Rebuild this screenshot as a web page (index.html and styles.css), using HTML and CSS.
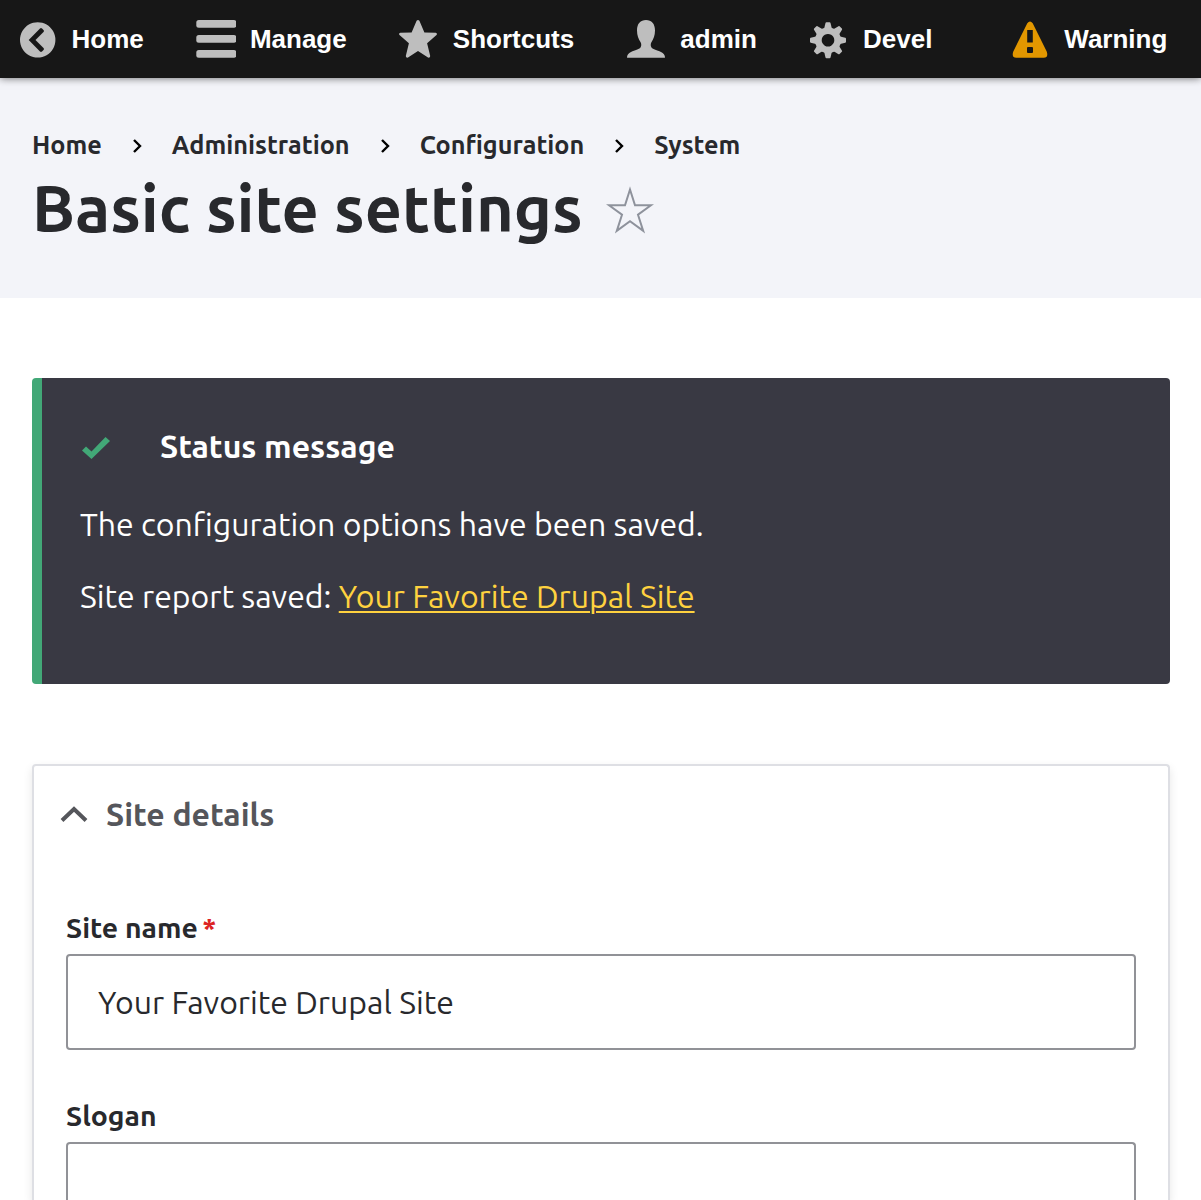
FILE: index.html
```html
<!DOCTYPE html>
<html lang="en">
<head>
<meta charset="utf-8">
<title>Basic site settings</title>
<link rel="stylesheet" href="styles.css">
</head>
<body>
<nav class="toolbar">
  <a class="tab"><svg class="icon" viewBox="0 0 40 40"><path fill-rule="evenodd" d="M20.700 2.200a17.700 17.700 0 1 0 .01 0zM23 8.500q1-.8 2 0l1.500 1.500q.9 1 0 2L18.500 20l8 8q.9 1 0 2L25 31.500q-1 .8-2 0L11.700 20z"/></svg><span>Home</span></a>
  <a class="tab"><svg class="icon" viewBox="0 0 40 40"><rect y="0" x=".3" width="40" height="7.700" rx="2.500"/><rect y="15" x=".3" width="40" height="7.700" rx="2.500"/><rect y="30" x=".3" width="40" height="7.700" rx="2.500"/></svg><span>Manage</span></a>
  <a class="tab"><svg class="icon" viewBox="0 0 40 40"><path transform="translate(-1 0)" d="M18.600.8q1.400-1.600 2.800 0l5 11.800 11.300.2q2 .6.800 2.200l-9.400 8.200 3.100 12.900q-.2 2-2.200 1.400L20 31l-10 6.500q-2 .6-2.200-1.400l3.100-12.900L1.500 15q-1.200-1.600.8-2.200l11.300-.2z"/></svg><span>Shortcuts</span></a>
  <a class="tab"><svg class="icon" viewBox="0 0 40 40"><path d="M20 0c5.500 0 9 3.500 9 10.500 0 5-1.500 8.500-3.600 11.700-.9 1.500-.9 3.800.1 5.300 1.500 2.300 5.500 2.200 9.500 4.500 2.500 1.400 4 3 4 5.200q0 .6-.7.6H1.700q-.7 0-.7-.6c0-2.200 1.500-3.800 4-5.200 4-2.300 8-2.200 9.500-4.500 1-1.500 1-3.800.1-5.300C12.500 19 11 15.500 11 10.500 11 3.500 14.500 0 20 0z"/></svg><span>admin</span></a>
  <a class="tab"><svg class="icon" viewBox="0 0 40 40"><g transform="translate(19 20.200)"><path fill-rule="evenodd" d="M0-13a13 13 0 1 0 .01 0zM0-6.300a6.300 6.300 0 1 1-.01 0z"/><g id="teeth"><path id="tooth" d="M-4-11l1.500-6.300q.2-.7.900-.7h3.200q.7 0 .9.700L4-11z"/><use href="#tooth" transform="rotate(45)"/><use href="#tooth" transform="rotate(90)"/><use href="#tooth" transform="rotate(135)"/></g><use href="#teeth" transform="rotate(180)"/></g></svg><span>Devel</span></a>
  <a class="tab tab-warning"><svg class="icon" viewBox="0 0 40 40"><path fill-rule="evenodd" d="M17.300 3.300q2.700-3.600 5.400 0L36.700 31.500q2 6-3 6.300H6.300q-5-.3-3-6.300zM17.200 10v12.500h5.600V10zM18 27q-1 0-1 1v4q0 1 1 1h4q1 0 1-1v-4q0-1-1-1z"/></svg><span>Warning</span></a>
</nav>
<header class="page-header">
  <nav class="breadcrumb">
    <a class="crumb-home">Home</a>
    <svg class="chevron" viewBox="0 0 10 16"><path d="M2 2l6 6-6 6"/></svg>
    <a class="crumb-admin">Administration</a>
    <svg class="chevron" viewBox="0 0 10 16"><path d="M2 2l6 6-6 6"/></svg>
    <a class="crumb-config">Configuration</a>
    <svg class="chevron" viewBox="0 0 10 16"><path d="M2 2l6 6-6 6"/></svg>
    <a class="crumb-system">System</a>
  </nav>
  <div class="title-row">
    <h1>Basic site settings</h1>
    <svg class="favorite" viewBox="0 0 48 48"><path d="M24 3.500l5 15.700H45L32 28.700l5.200 16.200L24 35.200 10.800 44.900 16 28.700 3 19.200h16z"/></svg>
  </div>
</header>
<main>
  <section class="message">
    <div class="message-head">
      <svg class="check" viewBox="0 0 28 24"><path d="M0 14.500L4 10.500l5.500 5L23.500 1l4.500 4L9.500 23z"/></svg>
      <h2>Status message</h2>
    </div>
    <p class="saved">The configuration options have been saved.</p>
    <p class="report">Site report saved: <a class="report-link">Your Favorite Drupal Site</a></p>
  </section>
  <section class="details">
    <div class="summary">
      <svg class="caret" viewBox="0 0 28 18"><path d="M2 15.500L14 4l12 11.500"/></svg>
      <span class="summary-text">Site details</span>
    </div>
    <label class="label-name" for="name"><span>Site name</span><span class="required">*</span></label>
    <input id="name" type="text" value="Your Favorite Drupal Site">
    <label class="label-slogan" for="slogan">Slogan</label>
    <input id="slogan" type="text">
  </section>
</main>
</body>
</html>
```
FILE: styles.css
```css
* { box-sizing: border-box; }
body {
  display: flex;
  flex-direction: column;
  margin: 0;
  height: 1200px;
  overflow: hidden;
  background: #fff;
  color: #28292d;
  font-family: Ubuntu, "Noto Sans", sans-serif;
}
h1, h2, p { margin: 0; }
.toolbar {
  position: relative;
  display: flex;
  flex: none;
  height: 78px;
  background: #171717;
  box-shadow: 0 0 8px rgba(0, 0, 0, .6);
  color: #fff;
  font: bold 26px/78px "Liberation Sans", Arial, sans-serif;
}
.tab { display: flex; gap: 14.17px; padding: 0 34.67px 0 17.33px; }
.tab-warning { margin-left: auto; padding-right: 33.67px; }
.icon { width: 40px; height: 40px; margin-top: 20px; fill: #bebebe; }
.tab-warning .icon { fill: #e29700; }
.page-header { flex: none; height: 220px; padding: 47px 32px 0; background: #f3f4f9; }
.breadcrumb {
  display: flex;
  align-items: center;
  height: 40px;
  font-size: 25.25px;
  font-weight: 600;
  line-height: 40px;
}
.chevron { width: 10px; height: 16px; margin: 2px 30px 0; fill: none; stroke: #000; stroke-width: 2.4; }
.title-row { display: flex; gap: 23.5px; height: 90px; }
h1 { margin-top: -2px; font-size: 64.8px; font-weight: 600; line-height: 90px; white-space: nowrap; }
.favorite { width: 48px; height: 48px; margin-top: 21px; fill: none; stroke: #8e929c; stroke-width: 2; }
main { display: flex; flex: 1; flex-direction: column; min-height: 0; padding: 80px 31px 0 32px; }
.message {
  flex: none;
  height: 306px;
  padding: 45px 38px;
  border-left: 10px solid #42a877;
  border-radius: 4px;
  background: #393943;
  color: #fff;
  font-size: 32px;
  font-weight: 400;
}
.message-head { display: flex; align-items: center; gap: 50px; height: 46px; }
.check { width: 28px; height: 24px; margin: 4px 0 0 2px; fill: #42a877; }
h2 { font-size: 32px; font-weight: 600; line-height: 46px; }
.saved { margin-top: 31px; line-height: 48px; }
.report { margin-top: 24px; line-height: 48px; }
.report-link { color: #ffd23f; text-decoration: underline; text-decoration-thickness: 2px; text-underline-offset: 3px; }
.details {
  flex: 1;
  min-height: 0;
  overflow: hidden;
  margin-top: 80px;
  padding: 24px 32px 0;
  border: 2px solid #dedfe4;
  border-bottom: 0;
  border-radius: 4px 4px 0 0;
  box-shadow: 0 4px 10px rgba(0, 0, 0, .1);
}
.summary { display: flex; align-items: center; gap: 18px; height: 48px; margin: 0 0 73px -6px; font-size: 32px; font-weight: 600; color: #55565b; }
.caret { width: 28px; height: 18px; fill: none; stroke: #55565b; stroke-width: 4; }
label { display: flex; height: 34px; font-size: 28.4px; font-weight: 600; line-height: 34px; margin-bottom: 9px; }
.required { margin-left: 4.5px; color: #dc2323; }
input {
  display: block;
  width: 100%;
  height: 96px;
  margin: 0 0 49px;
  padding: 0 30px;
  border: 2px solid #919297;
  border-radius: 4px;
  background: #fff;
  color: #28292d;
  font: 400 32px Ubuntu, "Noto Sans", sans-serif;
}
#slogan { height: 60px; margin: 0; border-bottom: 0; border-radius: 4px 4px 0 0; }
```
